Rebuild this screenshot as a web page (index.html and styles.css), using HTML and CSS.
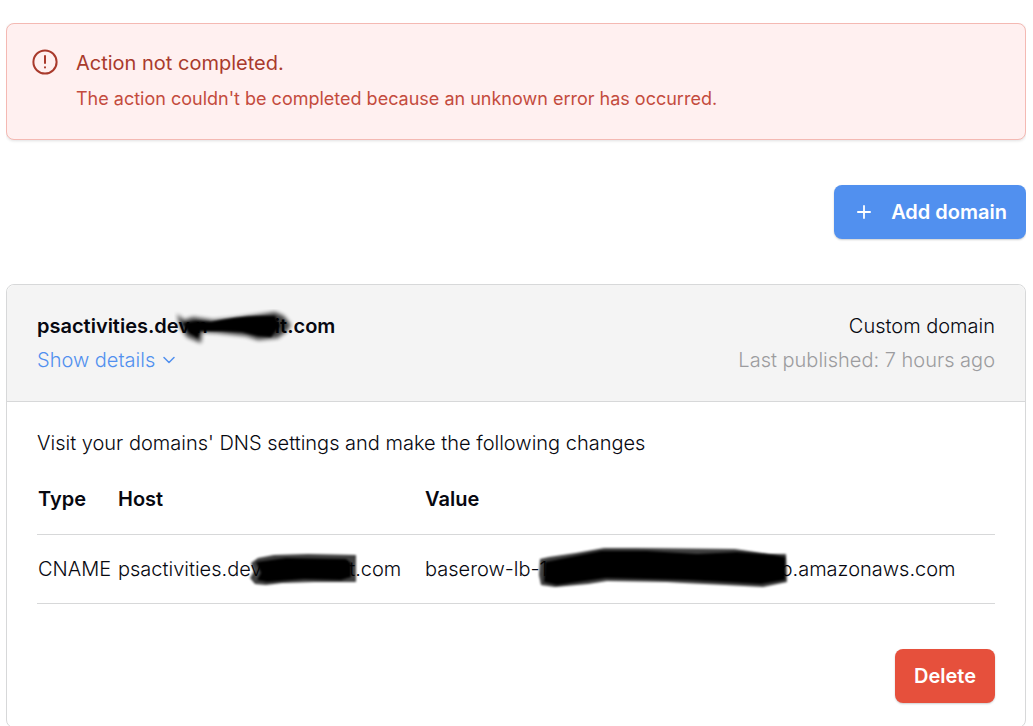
FILE: index.html
```html
<!DOCTYPE html>
<html lang="en">
<head>
    <meta charset="UTF-8">
    <meta name="viewport" content="width=device-width, initial-scale=1.0">
    <title>Domains</title>
    <link rel="stylesheet" href="styles.css">
</head>
<body>
    <div class="alert" role="alert">
        <svg class="alert-icon" viewBox="0 0 26 26" fill="none" stroke="currentColor" stroke-width="2" stroke-linecap="round">
            <circle cx="13" cy="13" r="11.6"/>
            <path d="M13 7v7"/>
            <path d="M13 18.2v.2"/>
        </svg>
        <div>
            <div class="alert-title">Action not completed.</div>
            <p class="alert-message">The action couldn't be completed because an unknown error has occurred.</p>
        </div>
    </div>

    <div class="actions">
        <button class="button button-add">
            <svg class="plus-icon" viewBox="0 0 14 14" fill="none" stroke="currentColor" stroke-width="1.8" stroke-linecap="round">
                <path d="M7 .9v12.2M.9 7h12.2"/>
            </svg>
            Add domain
        </button>
    </div>

    <div class="card">
        <div class="card-header">
            <div>
                <div class="domain-name">psactivities.dev.n<span class="masked masked-name"><svg class="scribble scribble-name" viewBox="0 0 120 40">
                    <defs>
                        <filter id="soft" x="-20%" y="-30%" width="140%" height="160%"><feGaussianBlur stdDeviation="2"/></filter>
                        <filter id="softer" x="-20%" y="-30%" width="140%" height="160%"><feGaussianBlur stdDeviation="1.2"/></filter>
                    </defs>
                    <path filter="url(#soft)" opacity=".75" d="M3 5L10 11L19 8L39 11L60 9L88 5L101 3L110 7L117 16L113 22L104 29L84 31L72 27L44 24L28 23L27 34L13 28L6 18Z"/>
                    <path filter="url(#softer)" d="M9 14L22 12L37 13Q66 6 101 7L106 17L97 28L84 27L68 23L48 22L26 22L24 29L15 24Z"/>
                </svg></span>it.com</div>
                <a class="details-link" href="#">Show details
                    <svg class="chevron-icon" viewBox="0 0 12 8" fill="none" stroke="currentColor" stroke-width="1.5" stroke-linecap="round" stroke-linejoin="round">
                        <path d="M1 1.5l5 5 5-5"/>
                    </svg>
                </a>
            </div>
            <div class="card-info">
                <div>Custom domain</div>
                <div class="published">Last published: 7 hours ago</div>
            </div>
        </div>
        <div class="card-body">
            <p class="instructions">Visit your domains' DNS settings and make the following changes</p>
            <table class="dns-table">
                <thead>
                    <tr>
                        <th class="col-type">Type</th>
                        <th class="col-host">Host</th>
                        <th>Value</th>
                    </tr>
                </thead>
                <tbody>
                    <tr>
                        <td>CNAME</td>
                        <td>psactivities.dev<span class="masked masked-host"><svg class="scribble scribble-host" viewBox="0 0 112 36">
                            <defs><filter id="soft-host" x="-10%" y="-20%" width="120%" height="140%"><feGaussianBlur stdDeviation="1.3"/></filter></defs>
                            <path filter="url(#soft-host)" opacity=".75" d="M3 11L10 6L26 3L60 2L108 3V30L95 30L66 30L34 31L18 33L7 32L2 26L6 19Z"/>
                            <path filter="url(#soft-host)" d="M8 10L38 6L98 7L103 11V25L93 28L56 27L19 30L9 28L13 21Z"/>
                        </svg></span>it.com</td>
                        <td>baserow-lb-1<span class="masked masked-value"><svg class="scribble scribble-value" viewBox="0 0 254 44">
                            <defs><filter id="soft-value" x="-5%" y="-20%" width="110%" height="140%"><feGaussianBlur stdDeviation="1"/></filter></defs>
                            <path filter="url(#soft-value)" opacity=".75" d="M3 13L12 11L39 7L67 2H100L198 3L232 8L249 8L250 36L226 41L188 39L147 37L130 36L70 35L51 38L18 41L4 39L2 29Z"/>
                            <path filter="url(#soft-value)" d="M8 16L64 5L110 5L160 8L200 6L236 9L248 11V34L224 38L150 34L69 32L20 39L7 36Z"/>
                        </svg></span>b.amazonaws.com</td>
                    </tr>
                </tbody>
            </table>
            <div class="card-footer">
                <button class="button button-delete">Delete</button>
            </div>
        </div>
    </div>
</body>
</html>
```
FILE: styles.css
```css
* {
    box-sizing: border-box;
}
body {
    margin: 23px 7px 0 6px;
    font-family: Inter, "Liberation Sans", sans-serif;
    font-size: 20px;
    font-weight: 300;
    line-height: 34px;
    color: #070810;
    background-color: #fff;
    overflow: hidden;
}
p {
    margin: 0;
}
.alert {
    display: flex;
    gap: 18px;
    padding: 22px 25px 21px;
    border: 1px solid #f4b9b3;
    border-radius: 8px;
    background-color: #fff0f0;
    color: #a93a2c;
    box-shadow: 0 1px 3px rgba(7, 8, 16, 0.12);
}
.alert-icon {
    flex: none;
    width: 26px;
    height: 26px;
    margin-top: 3px;
}
.alert-title {
    font-weight: 400;
}
.alert-message {
    margin-top: 2px;
    padding-bottom: 2px;
    font-size: 18px;
    font-weight: 400;
    color: #c44b3d;
}
.actions {
    display: flex;
    justify-content: flex-end;
    margin: 45px 0;
}
.button {
    display: flex;
    align-items: center;
    height: 54px;
    padding: 0 19px;
    border: 0;
    border-radius: 8px;
    color: #fff;
    font-family: inherit;
    font-size: 20px;
    font-weight: 600;
    box-shadow: 0 1px 2px rgba(7, 8, 16, 0.2);
    cursor: pointer;
}
.button-add {
    gap: 20px;
    padding-left: 23px;
    background-color: #5190ef;
}
.button-delete {
    background-color: #e6503c;
}
.plus-icon {
    width: 14px;
    height: 14px;
}
.card {
    border: 1px solid #d7d8d9;
    border-radius: 8px;
}
.card-header {
    display: flex;
    justify-content: space-between;
    padding: 24px 30px;
    border-bottom: 1px solid #d7d8d9;
    border-radius: 8px 8px 0 0;
    background-color: #f4f4f4;
}
.domain-name {
    font-weight: 600;
}
.details-link {
    display: flex;
    align-items: center;
    gap: 8px;
    color: #5190ef;
    text-decoration: none;
}
.chevron-icon {
    width: 12px;
    height: 8px;
}
.card-info {
    text-align: right;
}
.published {
    color: #9c9c9f;
}
.card-body {
    padding: 24px 30px;
}
.dns-table {
    width: 100%;
    margin-top: 5px;
    border-collapse: collapse;
    table-layout: fixed;
}
.dns-table th, .dns-table td {
    height: 69px;
    padding: 0 1px;
    border-bottom: 1px solid #d7d8d9;
    text-align: left;
    white-space: nowrap;
}
.dns-table th {
    font-weight: 600;
}
.col-type {
    width: 80px;
}
.col-host {
    width: 307px;
}
.card-footer {
    display: flex;
    justify-content: flex-end;
    padding-top: 45px;
}
/* hand-drawn strokes over the private part of a name */
.masked {
    position: relative;
    display: inline-block;
}
.masked-name {
    width: 67px;
}
.masked-host {
    width: 83px;
}
.masked-value {
    width: 233px;
}
.scribble {
    position: absolute;
    fill: #000;
}
.scribble-name {
    left: -34px;
    bottom: -16px;
    width: 120px;
    height: 40px;
}
.scribble-host {
    left: -14px;
    bottom: -12px;
    width: 112px;
    height: 36px;
}
.scribble-value {
    left: -10px;
    bottom: -14px;
    width: 254px;
    height: 44px;
}
```
